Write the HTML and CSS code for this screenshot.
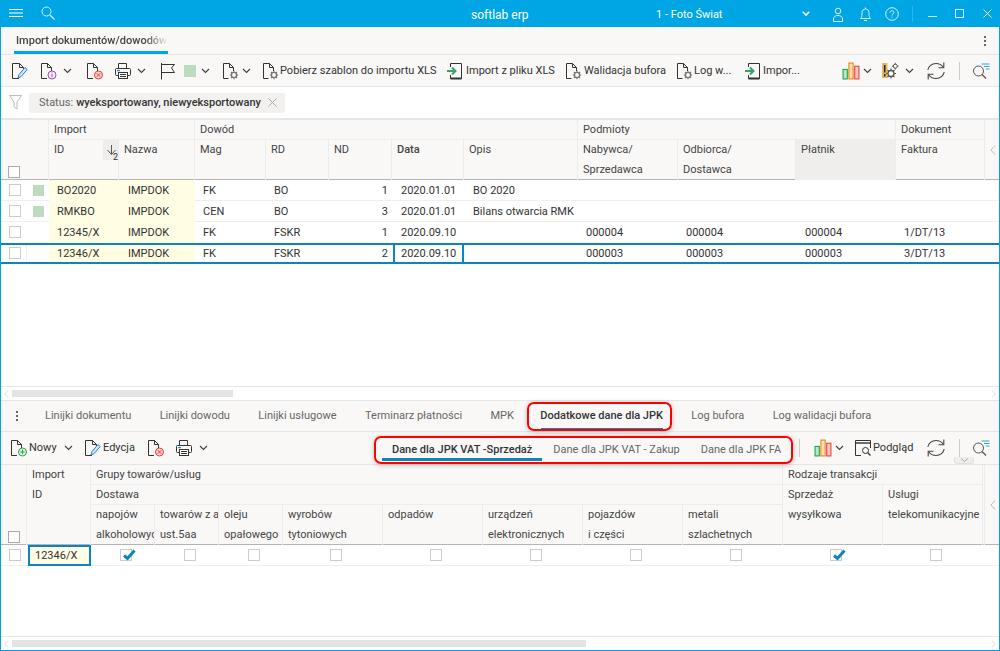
FILE: index.html
```html
<!DOCTYPE html>
<html lang="pl">
<head>
<meta charset="utf-8">
<title>softlab erp</title>
<link rel="stylesheet" href="styles.css">
</head>
<body>
<svg class="defs" width="0" height="0" aria-hidden="true">
  <symbol id="chev" viewBox="0 0 9 6"><path d="M1 1L4.500 4.500L8 1" fill="none" stroke="#444" stroke-width="1.200"/></symbol>
  <symbol id="i-edit" viewBox="0 0 18 18"><path d="M1.500 1.500H8.500L12.500 5.500V7M8 16.500H1.500V1.500M8.500 1.500V5.500H12.500" fill="none" stroke="#333"/><path d="M7 16L8 12.500L14 5.500L16.200 7.500L10 14.700Z" fill="#cfe6f5" stroke="#2b83c6"/></symbol>
  <symbol id="i-info" viewBox="0 0 18 18"><path d="M1.500 1.500H7.500L11.500 5.500V9M7 16.500H1.500V1.500M7.500 1.500V5.500H11.500" fill="none" stroke="#333"/><circle cx="12" cy="13" r="4" fill="#f6ecf8" stroke="#9b4fb0"/><path d="M12 12V15.200M12 10.500V11.300" stroke="#9b4fb0"/></symbol>
  <symbol id="i-del" viewBox="0 0 18 18"><path d="M1.500 1.500H7.500L11.500 5.500V9M7 16.500H1.500V1.500M7.500 1.500V5.500H11.500" fill="none" stroke="#333"/><circle cx="12.500" cy="13" r="4" fill="#fbd0d0" stroke="#e8413c"/><path d="M10.800 11.300L14.200 14.700M14.200 11.300L10.800 14.700" stroke="#e8413c"/></symbol>
  <symbol id="i-new" viewBox="0 0 18 18"><path d="M1.500 1.500H7.500L11.500 5.500V9M7 16.500H1.500V1.500M7.500 1.500V5.500H11.500" fill="none" stroke="#333"/><circle cx="12.500" cy="13" r="4" fill="#e2f5e4" stroke="#2aa24a"/><path d="M12.500 10.800V15.200M10.300 13H14.700" stroke="#2aa24a"/></symbol>
  <symbol id="i-gear" viewBox="0 0 18 18"><path d="M1.500 1.500H7.500L11.500 5.500V9M6.500 16.500H1.500V1.500M7.500 1.500V5.500H11.500" fill="none" stroke="#333"/><circle cx="12" cy="13" r="2.600" fill="none" stroke="#777" stroke-width="1.400"/><path d="M12 8.800V10.200M12 15.800V17.200M7.800 13H9.200M14.800 13H16.200M9 10L10 11M14 15L15 16M15 10L14 11M10 15L9 16" stroke="#777" stroke-width="1.200"/></symbol>
  <symbol id="i-print" viewBox="0 0 18 18"><path d="M4.500 6V1.500H12.500V6" fill="none" stroke="#333"/><rect x="1.500" y="6.500" width="15" height="7" rx="1" fill="none" stroke="#333"/><rect x="4.500" y="10.500" width="9" height="6" fill="#fff" stroke="#333"/><path d="M6 12.500H12M6 14.500H12" stroke="#333"/><rect x="3" y="8" width="3" height="1.200" fill="#2b83c6"/></symbol>
  <symbol id="i-flag" viewBox="0 0 16 18"><path d="M1.500 1V17.500" stroke="#333" fill="none"/><path d="M1.500 2.500H14.500L11.500 6L14.500 10.500H1.500" fill="none" stroke="#333"/></symbol>
  <symbol id="i-import" viewBox="0 0 18 18"><path d="M4.500 5V1.500H15.500V16.500H4.500V13" fill="none" stroke="#333"/><path d="M4.500 16.500H15.500" stroke="#333" stroke-width="2"/><path d="M1 9H9M6 5.500L9.500 9L6 12.500" fill="none" stroke="#36a26e" stroke-width="2"/></symbol>
  <symbol id="i-bars" viewBox="0 0 17 17"><rect x="1" y="7" width="4" height="9" fill="#bfe5c9" stroke="#18a04a"/><rect x="6.500" y="1" width="4" height="15" fill="#fde2a8" stroke="#ef7d22"/><rect x="12" y="4" width="4" height="12" fill="#f8c3c3" stroke="#e8413c"/></symbol>
  <symbol id="i-warn" viewBox="0 0 17 18"><rect x="0.500" y="1" width="5.500" height="15" fill="#e6b866"/><path d="M3.200 3V10.500M3.200 12V14.500" stroke="#222" stroke-width="1.500"/><circle cx="9.500" cy="11.500" r="3" fill="none" stroke="#555" stroke-width="1.300"/><path d="M9.500 6.500V8.200M9.500 14.800V16.500M4.500 11.500H6.200M12.800 11.500H14.500M6 8L7.200 9.200M11.800 13.800L13 15M13 8L11.800 9.200M7.200 13.800L6 15" stroke="#555" stroke-width="1.200"/><circle cx="13.800" cy="4.200" r="2" fill="none" stroke="#555"/><path d="M13.800 .8V2.200M13.800 6.200V7.600M10.500 4.200H11.800M15.800 4.200H17" stroke="#555"/></symbol>
  <symbol id="i-refresh" viewBox="0 0 18 18"><path d="M0.800 8C1.300 4.300 4.800 1.500 9 1.500C12 1.500 14.500 2.800 16 5" fill="none" stroke="#444" stroke-width="1.100"/><path d="M16.800 .5V5.800H11.500" fill="none" stroke="#444" stroke-width="1.100"/><path d="M17.200 10C16.700 13.700 13.200 16.500 9 16.500C6 16.500 3.500 15.200 2 13" fill="none" stroke="#444" stroke-width="1.100"/><path d="M1.200 17.500V12.200H6.500" fill="none" stroke="#444" stroke-width="1.100"/></symbol>
  <symbol id="i-find" viewBox="0 0 18 16"><circle cx="6.500" cy="8" r="5" fill="none" stroke="#555"/><path d="M10 11.500L14 15.500" stroke="#555" stroke-width="1.300"/><path d="M9.500 1H17.500M12 3.500H17.500M14 6H17.500" stroke="#2aa6e0"/></symbol>
  <symbol id="i-preview" viewBox="0 0 18 18"><path d="M7 16.500H1.500V1.500H16.500V9" fill="none" stroke="#333"/><path d="M1.500 4H16.500" stroke="#333" stroke-width="1.400"/><circle cx="11.500" cy="11.500" r="3" fill="none" stroke="#333"/><path d="M13.800 13.800L16.500 16.500" stroke="#333" stroke-width="1.300"/></symbol>
  <symbol id="i-check" viewBox="0 0 14 12"><path d="M2 6.500L5.500 9.500L12.500 1.500" fill="none" stroke="#0a85bd" stroke-width="3"/></symbol>
</svg>

<div class="app">
  <header class="titlebar">
    <svg class="t-burger" width="14" height="8" viewBox="0 0 14 8"><path d="M0 .5H14M0 4H14M0 7.500H14" stroke="#fff"/></svg>
    <svg class="t-search" width="14" height="14" viewBox="0 0 14 14"><circle cx="5.500" cy="5.500" r="4.500" fill="none" stroke="#d6f0fb"/><path d="M9 9L13.500 13.500" stroke="#d6f0fb" stroke-width="1.200"/></svg>
    <span class="t-app">softlab erp</span>
    <span class="t-company">1 - Foto Świat</span>
    <svg class="t-chev" width="8" height="5" viewBox="0 0 8 5"><path d="M.7 .7L4 4L7.300 .7" fill="none" stroke="#fff" stroke-width="1.600"/></svg>
    <svg class="t-user" width="10" height="15" viewBox="0 0 10 15"><circle cx="5" cy="4" r="2.800" fill="none" stroke="#d6f0fb"/><path d="M.5 14.500V12C.5 9.500 2.500 8.500 5 8.500C7.500 8.500 9.500 9.500 9.500 12V14.500Z" fill="none" stroke="#d6f0fb"/></svg>
    <svg class="t-bell" width="11" height="15" viewBox="0 0 11 15"><path d="M.5 11.500C1.500 10.500 2 9.500 2 7V5.500C2 3.500 3.500 2 5.500 2C7.500 2 9 3.500 9 5.500V7C9 9.500 9.500 10.500 10.500 11.500Z" fill="none" stroke="#d6f0fb"/><path d="M5.500 .5V2M4 13.500H7" stroke="#d6f0fb"/></svg>
    <svg class="t-help" width="14" height="14" viewBox="0 0 14 14"><circle cx="7" cy="7" r="6.300" fill="none" stroke="#d6f0fb"/><path d="M5 5.500C5 4.300 6 3.700 7 3.700C8.200 3.700 9 4.500 9 5.400C9 6.800 7 6.800 7 8.500M7 9.800V10.800" fill="none" stroke="#d6f0fb"/></svg>
    <span class="t-sep"></span>
    <svg class="t-min" width="9" height="1" viewBox="0 0 9 1"><path d="M0 .5H9" stroke="#bfe8f8"/></svg>
    <svg class="t-max" width="9" height="9" viewBox="0 0 9 9"><rect x=".5" y=".5" width="8" height="8" fill="none" stroke="#d6f0fb"/></svg>
    <svg class="t-close" width="9" height="9" viewBox="0 0 9 9"><path d="M.5 .5L8.500 8.500M8.500 .5L.5 8.500" stroke="#d6f0fb"/></svg>
  </header>

  <nav class="doc-tabs">
    <div class="doc-tab"><span class="doc-tab-text">Import dokumentów/dowodów</span></div>
    <div class="dots"><i></i><i></i><i></i></div>
  </nav>

  <div class="toolbar tb-top">
    <svg class="ic"><use href="#i-edit"/></svg>
    <svg class="ic m13"><use href="#i-info"/></svg>
    <svg class="chv m7"><use href="#chev"/></svg>
    <svg class="ic m14"><use href="#i-del"/></svg>
    <svg class="ic m12"><use href="#i-print"/></svg>
    <svg class="chv m7"><use href="#chev"/></svg>
    <svg class="ic m13"><use href="#i-flag"/></svg>
    <span class="swatch m9"></span>
    <svg class="chv m5"><use href="#chev"/></svg>
    <svg class="ic m12"><use href="#i-gear"/></svg>
    <svg class="chv m4"><use href="#chev"/></svg>
    <svg class="ic m11"><use href="#i-gear"/></svg>
    <span class="lbl w-pobierz">Pobierz szablon do importu XLS</span>
    <svg class="ic m9"><use href="#i-import"/></svg>
    <span class="lbl w-import">Import z pliku XLS</span>
    <svg class="ic m8"><use href="#i-gear"/></svg>
    <span class="lbl w-walid">Walidacja bufora</span>
    <svg class="ic m10"><use href="#i-gear"/></svg>
    <span class="lbl w-log">Log w...</span>
    <svg class="ic m12"><use href="#i-import"/></svg>
    <span class="lbl w-impor">Impor...</span>
    <div class="tb-right">
      <svg class="ic"><use href="#i-bars"/></svg>
      <svg class="chv m5"><use href="#chev"/></svg>
      <svg class="ic m9"><use href="#i-warn"/></svg>
      <svg class="chv m8"><use href="#chev"/></svg>
      <svg class="ic m13"><use href="#i-refresh"/></svg>
      <span class="vsep m16"></span>
      <svg class="ic-find m12"><use href="#i-find"/></svg>
    </div>
  </div>

  <div class="filterbar">
    <svg class="funnel" width="13" height="15" viewBox="0 0 13 15"><path d="M.5 .5H12.500L8 7V14L5 12V7Z" fill="none" stroke="#bbb"/></svg>
    <div class="chip"><span class="chip-k">Status:</span><span class="chip-v">wyeksportowany, niewyeksportowany</span>
      <svg class="chip-x" width="9" height="9" viewBox="0 0 9 9"><path d="M.5 .5L8.500 8.500M8.500 .5L.5 8.500" stroke="#aaa"/></svg>
    </div>
  </div>

  <section class="pane pane-top">
    <div class="ug ug-head">
      <div class="hc c-sel"><span class="cb cb-head"></span></div>
      <div class="hc c-mark"></div>
      <div class="hc g-import">Import</div>
      <div class="hc g-dowod">Dowód</div>
      <div class="hc g-podm">Podmioty</div>
      <div class="hc g-dok">Dokument</div>
      <div class="hc c-arrow"><svg width="6" height="10" viewBox="0 0 6 10"><path d="M5 .5L1 5L5 9.500" fill="none" stroke="#bbb"/></svg></div>
      <div class="hc h-id">ID</div>
      <div class="hc h-sort"><svg width="16" height="20" viewBox="0 0 16 20"><path d="M8.500 5V14M4.500 10L8.500 14.500L12.500 10" fill="none" stroke="#555"/></svg><span class="sort-n">2</span></div>
      <div class="hc">Nazwa</div>
      <div class="hc">Mag</div>
      <div class="hc">RD</div>
      <div class="hc">ND</div>
      <div class="hc h-data">Data</div>
      <div class="hc">Opis</div>
      <div class="hc">Nabywca/<br>Sprzedawca</div>
      <div class="hc">Odbiorca/<br>Dostawca</div>
      <div class="hc h-act">Płatnik</div>
      <div class="hc">Faktura</div>
    </div>

    <div class="ug ur">
      <div class="dc d-sel"><span class="cb"></span></div><div class="dc d-mark"><span class="sq"></span></div>
      <div class="dc d-id">BO2020</div><div class="dc d-nazwa">IMPDOK</div><div class="dc">FK</div><div class="dc">BO</div><div class="dc d-nd">1</div><div class="dc d-date">2020.01.01</div><div class="dc d-opis">BO 2020</div><div class="dc"></div><div class="dc"></div><div class="dc"></div><div class="dc"></div>
    </div>
    <div class="ug ur">
      <div class="dc d-sel"><span class="cb"></span></div><div class="dc d-mark"><span class="sq"></span></div>
      <div class="dc d-id">RMKBO</div><div class="dc d-nazwa">IMPDOK</div><div class="dc">CEN</div><div class="dc">BO</div><div class="dc d-nd">3</div><div class="dc d-date">2020.01.01</div><div class="dc d-opis">Bilans otwarcia RMK</div><div class="dc"></div><div class="dc"></div><div class="dc"></div><div class="dc"></div>
    </div>
    <div class="ug ur ur-prev">
      <div class="dc d-sel"><span class="cb"></span></div><div class="dc d-mark"></div>
      <div class="dc d-id">12345/X</div><div class="dc d-nazwa">IMPDOK</div><div class="dc">FK</div><div class="dc">FSKR</div><div class="dc d-nd">1</div><div class="dc d-date">2020.09.10</div><div class="dc d-opis"></div><div class="dc">000004</div><div class="dc">000004</div><div class="dc d-pl">000004</div><div class="dc">1/DT/13</div>
    </div>
    <div class="ug ur ur-active">
      <div class="dc d-sel d-line"><span class="cb"></span></div><div class="dc d-mark"></div>
      <div class="dc d-id">12346/X</div><div class="dc d-nazwa">IMPDOK</div><div class="dc">FK</div><div class="dc">FSKR</div><div class="dc d-nd">2</div><div class="dc d-focus">2020.09.10</div><div class="dc d-opis"></div><div class="dc">000003</div><div class="dc">000003</div><div class="dc d-pl">000003</div><div class="dc">3/DT/13</div>
    </div>

    <div class="pane-fill"></div>
    <div class="hscroll"><svg class="sc-l" width="5" height="8" viewBox="0 0 5 8"><path d="M4 .5L1 4L4 7.500" fill="none" stroke="#ddd"/></svg><div class="sc-track"><div class="sc-thumb sc-thumb-top"></div></div><svg class="sc-r" width="5" height="8" viewBox="0 0 5 8"><path d="M1 .5L4 4L1 7.500" fill="none" stroke="#ddd"/></svg></div>
  </section>

  <nav class="sub-tabs">
    <div class="dots dots-l"><i></i><i></i><i></i></div>
    <span class="st">Linijki dokumentu</span>
    <span class="st">Linijki dowodu</span>
    <span class="st">Linijki usługowe</span>
    <span class="st">Terminarz płatności</span>
    <span class="st">MPK</span>
    <span class="st st-active">Dodatkowe dane dla JPK</span>
    <span class="st">Log bufora</span>
    <span class="st">Log walidacji bufora</span>
  </nav>

  <div class="toolbar tb-low">
    <svg class="ic"><use href="#i-new"/></svg>
    <span class="lbl w-nowy">Nowy</span>
    <svg class="chv m7"><use href="#chev"/></svg>
    <svg class="ic m11"><use href="#i-edit"/></svg>
    <span class="lbl w-edycja">Edycja</span>
    <svg class="ic m11"><use href="#i-del"/></svg>
    <svg class="ic m12"><use href="#i-print"/></svg>
    <svg class="chv m8"><use href="#chev"/></svg>
    <div class="jpk-box">
      <span class="jt jt-active">Dane dla JPK VAT -Sprzedaż</span>
      <span class="jt">Dane dla JPK VAT - Zakup</span>
      <span class="jt">Dane dla JPK FA</span>
    </div>
    <span class="vsep m6"></span>
    <svg class="ic m14"><use href="#i-bars"/></svg>
    <svg class="chv m5"><use href="#chev"/></svg>
    <svg class="ic m10"><use href="#i-preview"/></svg>
    <span class="lbl w-pod">Podgląd</span>
    <svg class="ic m13"><use href="#i-refresh"/></svg>
    <span class="vsep m16"></span>
    <svg class="ic-find m12"><use href="#i-find"/></svg>
    <span class="collapse"><svg width="9" height="5" viewBox="0 0 9 5"><path d="M1 .5L4.500 3.500L8 .5" fill="none" stroke="#aaa"/></svg></span>
  </div>

  <section class="pane pane-low">
    <div class="lg lg-head">
      <div class="hc l-sel"><span class="cb cb-head"></span></div>
      <div class="hc l-imp">Import</div>
      <div class="hc l-id">ID</div>
      <div class="hc l-grupy">Grupy towarów/usług</div>
      <div class="hc l-rodz">Rodzaje transakcji</div>
      <div class="hc l-arrow"><svg width="6" height="10" viewBox="0 0 6 10"><path d="M5 .5L1 5L5 9.500" fill="none" stroke="#bbb"/></svg></div>
      <div class="hc l-dost">Dostawa</div>
      <div class="hc l-sprz">Sprzedaż<br>wysyłkowa</div>
      <div class="hc l-usl">Usługi<br>telekomunikacyjne</div>
      <div class="hc l-end"></div>
      <div class="hc l-sub">napojów<br>alkoholowych</div>
      <div class="hc l-sub">towarów z art.<br>ust.5aa</div>
      <div class="hc l-sub">oleju<br>opałowego</div>
      <div class="hc l-sub">wyrobów<br>tytoniowych</div>
      <div class="hc l-sub">odpadów</div>
      <div class="hc l-sub">urządzeń<br>elektronicznych</div>
      <div class="hc l-sub">pojazdów<br>i części</div>
      <div class="hc l-sub">metali<br>szlachetnych</div>
    </div>
    <div class="lg lr">
      <div class="lc lc-first"><span class="cb"></span></div>
      <div class="lc lc-id">12346/X</div>
      <div class="lc lc-c"><span class="cb cb-on"><svg class="chk" width="14" height="12"><use href="#i-check"/></svg></span></div>
      <div class="lc lc-c"><span class="cb"></span></div>
      <div class="lc lc-c"><span class="cb"></span></div>
      <div class="lc lc-c"><span class="cb"></span></div>
      <div class="lc lc-c"><span class="cb"></span></div>
      <div class="lc lc-c"><span class="cb"></span></div>
      <div class="lc lc-c"><span class="cb"></span></div>
      <div class="lc lc-c"><span class="cb"></span></div>
      <div class="lc lc-c"><span class="cb cb-on"><svg class="chk" width="14" height="12"><use href="#i-check"/></svg></span></div>
      <div class="lc lc-c"><span class="cb"></span></div>
    </div>
    <div class="pane-fill"></div>
    <div class="hscroll hscroll-low"><svg class="sc-l" width="5" height="8" viewBox="0 0 5 8"><path d="M4 .5L1 4L4 7.500" fill="none" stroke="#ddd"/></svg><div class="sc-track"><div class="sc-thumb sc-thumb-low"></div></div><svg class="sc-r" width="5" height="8" viewBox="0 0 5 8"><path d="M1 .5L4 4L1 7.500" fill="none" stroke="#ddd"/></svg></div>
  </section>

  <span class="hl hl-tab"></span>
</div>
</body>
</html>
```

FILE: styles.css
```css
* { box-sizing: border-box; }
html, body { margin: 0; padding: 0; }
body { width: 1000px; height: 651px; overflow: hidden; font: 11px/20px Roboto, "Liberation Sans", sans-serif; color: #333; background: #fff; }
.defs { position: absolute; }
svg { display: block; flex: none; }

.app { position: relative; width: 1000px; height: 651px; display: flex; flex-direction: column; border: 1px solid #00a5e3; border-top: 0; background: #fff; }

/* title bar */
.titlebar { height: 27px; margin: 0 -1px; background: #00a5e3; display: flex; align-items: center; color: #fff; flex: none; }
.t-burger { margin-left: 9px; margin-top: -1px; }
.t-search { margin-left: 18px; margin-top: -1px; }
.t-app { margin-left: 416px; width: 60px; font-size: 12px; white-space: nowrap; margin-top: 2px; }
.t-company { margin-left: 125px; width: 70px; white-space: nowrap; margin-top: 2px; }
.t-chev { margin-left: 76px; margin-top: -1px; }
.t-user { margin-left: 23px; margin-top: 1px; }
.t-bell { margin-left: 17px; margin-top: 1px; }
.t-help { margin-left: 14px; }
.t-sep { width: 1px; height: 16px; background: #2cb5e8; margin-left: 13px; }
.t-min { margin-left: 15px; margin-top: 6px; }
.t-max { margin-left: 18px; margin-top: -1px; }
.t-close { margin-left: 19px; margin-top: -1px; }

/* document tabs */
.doc-tabs { height: 28px; flex: none; background: #f9f8f7; border-bottom: 1px solid #e6e6e6; display: flex; justify-content: space-between; padding: 0 13px 0 13px; }
.doc-tab { width: 154px; height: 27px; border-bottom: 3px solid #00a5e3; padding: 4px 0 0 2px; overflow: hidden; white-space: nowrap; font-weight: 500; }
.doc-tab-text { display: block; width: 152px; color: #444; -webkit-mask-image: linear-gradient(90deg, #000 85%, transparent 100%); mask-image: linear-gradient(90deg, #000 85%, transparent 100%); overflow: hidden; }
.dots { display: flex; flex-direction: column; gap: 2px; padding-top: 9px; width: 2px; }
.dots i { display: block; width: 2px; height: 2px; background: #666; }
.dots-l { padding-top: 0; margin: 0 27px 0 15px; }

/* toolbars */
.toolbar { display: flex; align-items: center; flex: none; background: #f9f8f7; }
.toolbar > * { flex: none; }
.tb-top { height: 32px; padding-left: 10px; border-bottom: 1px solid #e6e6e6; }
.tb-low { height: 33px; padding-left: 9px; position: relative; border-bottom: 1px solid #e6e6e6; }
.tb-right { display: flex; align-items: center; margin-left: 41px; }
.ic { width: 18px; height: 18px; margin-right: -2px; }
.ic-find { width: 18px; height: 16px; }
.chv { width: 9px; height: 6px; }
.m4 { margin-left: 4px; } .m5 { margin-left: 5px; } .m6 { margin-left: 6px; } .m7 { margin-left: 7px; }
.m8 { margin-left: 8px; } .m9 { margin-left: 9px; } .m10 { margin-left: 10px; } .m11 { margin-left: 11px; } .m12 { margin-left: 12px; }
.m13 { margin-left: 13px; } .m14 { margin-left: 14px; } .m16 { margin-left: 16px; }
.swatch { width: 12px; height: 12px; background: #bddcbf; }
.lbl { white-space: nowrap; }
.w-pobierz { width: 157px; margin-left: 2px; } .w-import { width: 91px; margin-left: 4px; } .w-walid { width: 82px; margin-left: 3px; } .w-log { width: 38px; margin-left: 2px; } .w-impor { width: 38px; margin-left: 3px; }
.w-nowy { width: 28px; margin-left: 3px; } .w-edycja { width: 33px; margin-left: 3px; } .w-pod { width: 41px; margin-left: 3px; }
.vsep { width: 1px; height: 18px; background: #ccc; }
.collapse { position: absolute; left: 953px; top: 25px; width: 20px; height: 7px; background: #eee; border: 1px solid #e0e0e0; border-top-color: #eee; border-radius: 0 0 3px 3px; display: flex; justify-content: center; }

/* filter */
.filterbar { height: 33px; flex: none; display: flex; align-items: center; padding: 0 0 0 8px; border-bottom: 2px solid #e6e6e6; background: #fff; }
.chip { margin-left: 7px; width: 256px; height: 20px; background: #f2f1f0; border-radius: 2px; display: flex; align-items: center; padding-left: 10px; white-space: nowrap; }
.chip-k { color: #666; }
.chip-v { color: #333; margin-left: 3px; font-weight: 500; }
.chip-x { margin-left: 7px; }

/* panes */
.pane { display: flex; flex-direction: column; min-height: 0; }
.pane-top { height: 281px; flex: none; }
.pane-low { flex: 1; }
.pane-fill { flex: 1; }
.hscroll { display: flex; align-items: center; height: 15px; flex: none; border-top: 1px solid #e6e6e6; border-bottom: 1px solid #e6e6e6; padding: 0 3px; background: #fff; }
.hscroll-low { height: 14px; border-bottom: 0; }
.sc-track { flex: 1; height: 7px; margin: 0 3px; }
.sc-thumb { height: 7px; background: #e4e4e4; }
.sc-thumb-top { width: 221px; }
.sc-thumb-low { width: 574px; }

/* upper grid */
.ug { display: grid; grid-template-columns: 26px 22px 54px 16px 76px 71px 63px 63px 72px 114px 100px 118px 100px 89px 14px; }
.ug-head { grid-template-rows: 20px 40px; height: 60px; background: #f9f8f7; border-bottom: 1px solid #b5b5b5; flex: none; }
.hc { padding-left: 5px; color: #444; border-right: 1px solid #ececec; border-bottom: 1px solid #ececec; white-space: nowrap; overflow: hidden; line-height: 20px; }
.ug-head .hc:nth-child(n+8) { border-bottom: 0; }
.c-sel { grid-column: 1; grid-row: 1 / span 2; border: 0; padding: 0; display: flex; align-items: flex-end; }
.c-mark { grid-column: 2; grid-row: 1 / span 2; border-bottom: 0; }
.g-import { grid-column: 3 / span 3; }
.g-dowod { grid-column: 6 / span 5; }
.g-podm { grid-column: 11 / span 3; }
.g-dok { grid-column: 14; }
.c-arrow { grid-column: 15; grid-row: 1 / span 2; border: 0; padding: 25px 0 0 5px; }
.h-id { grid-column: 3; border-right: 0; }
.h-sort { grid-column: 4; position: relative; padding: 0; background: linear-gradient(#eeedec 0 20px, transparent 20px); }
.sort-n { position: absolute; left: 10px; top: 7px; font-size: 9px; color: #333; }
.h-data { font-weight: 500; }
.h-act { background: #efeeed; }

.cb { display: block; width: 12px; height: 12px; border: 1px solid #ccc; background: #fff; position: relative; }
.cb-head { border-color: #aaa; margin: 0 0 2px 7px; }
.ur { height: 21px; border-bottom: 1px solid #efefef; flex: none; }
.dc { padding: 1px 0 0 8px; line-height: 20px; white-space: nowrap; color: #333; }
.ur .d-sel { padding: 4px 0 0 8px; }
.ur .d-mark { padding: 5px 0 0 6px; }
.sq { display: block; width: 11px; height: 11px; background: #bddcbf; }
.d-id { grid-column: 3 / span 2; background: #fffde3; }
.d-nazwa { background: #fffde3; padding-left: 9px; }
.dc.d-nd { padding: 1px 4px 0 0; text-align: right; }
.d-date, .d-opis, .d-pl { padding-left: 9px; }
.ur-prev { border-bottom: 0; }
.ur-active { border-top: 2px solid #0a85bd; border-bottom: 2px solid #0a85bd; }
.ur-active .dc { line-height: 17px; padding-top: 0; }
.ur-active .d-sel.d-line { padding-top: 2px; border-right: 1px solid #efefef; }
.ur-active .d-focus { border-left: 2px solid #0a85bd; border-right: 2px solid #0a85bd; margin-left: 1px; padding-left: 6px; }

/* sub tabs */
.sub-tabs { height: 31px; flex: none; background: #f9f8f7; border-bottom: 1px solid #e6e6e6; display: flex; align-items: center; color: #666; position: relative; }
.st { margin-right: 28.4px; white-space: nowrap; line-height: 30px; }
.st-active { font-weight: 500; color: #333; position: relative; margin-left: -2px; }
.st-active::after { content: ""; position: absolute; left: 1px; right: 0; bottom: 1px; height: 2px; background: #0a85bd; }

.jpk-box { margin: 4px 0 1px 166px; width: 419px; height: 28px; border: 2px solid #f00; border-radius: 7px; box-shadow: 0 1px 5px rgba(0,0,0,.25); display: flex; padding-left: 6px; gap: 1px; color: #666; }
.jt { padding: 0 10px; line-height: 23px; white-space: nowrap; height: 23px; }
.jt-active { font-weight: 500; color: #333; border-bottom: 3px solid #0a85bd; }

.hl { position: absolute; pointer-events: none; }
.hl-tab { left: 526px; top: 402px; width: 145px; height: 29px; border: 2px solid #f00; border-radius: 7px; box-shadow: 0 1px 5px rgba(0,0,0,.25); }

/* lower grid */
.lg { display: grid; grid-template-columns: 26px 64px 64px 64px 64px 100px 100px 100px 100px 100px 100px 100px 2px 14px; }
.lg-head { grid-template-rows: 20px 20px 40px; height: 80px; background: #f9f8f7; border-bottom: 1px solid #b5b5b5; flex: none; }
.l-sel { grid-column: 1; grid-row: 1 / span 3; padding: 0; display: flex; align-items: flex-end; border-bottom: 0; }
.l-imp { grid-column: 2; grid-row: 1; border-bottom: 0; }
.l-id { grid-column: 2; grid-row: 2 / span 2; border-bottom: 0; }
.l-grupy { grid-column: 3 / span 8; grid-row: 1; }
.l-dost { grid-column: 3 / span 8; grid-row: 2; }
.l-rodz { grid-column: 11 / span 2; grid-row: 1; }
.l-sprz { grid-column: 11; grid-row: 2 / span 2; border-bottom: 0; }
.l-usl { grid-column: 12; grid-row: 2 / span 2; border-bottom: 0; }
.l-end { grid-column: 13; grid-row: 1 / span 3; border-bottom: 0; padding: 0; }
.l-arrow { grid-column: 14; grid-row: 1 / span 3; border: 0; padding: 35px 0 0 5px; }
.l-sub { grid-row: 3; border-bottom: 0; }
.lr { height: 21px; border-bottom: 1px solid #efefef; flex: none; }
.lc { line-height: 20px; }
.lc-first { padding: 4px 0 0 8px; }
.lc-id { border: 2px solid #0a85bd; margin-left: 1px; background: #fffde3; padding-left: 5px; line-height: 17px; height: 21px; white-space: nowrap; }
.lc-c { padding: 4px 0 0 6px; display: flex; justify-content: center; }
.chk { position: absolute; left: 1px; top: -1px; }
```
